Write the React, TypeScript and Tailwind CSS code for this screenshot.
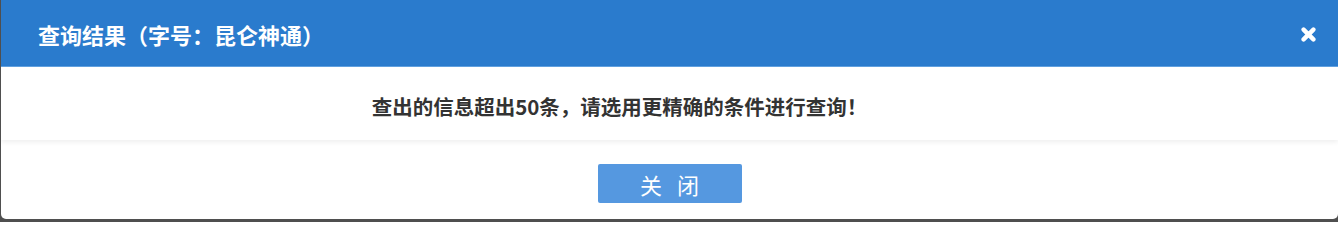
import React from "react";

export default function App() {
  const font = { fontFamily: '"Noto Sans CJK SC", "Noto Sans", sans-serif' };
  return (
    <div className="w-[1338px] h-[222px] bg-[#4f4f4f] pl-px pb-[3px]" style={font}>
      <div className="h-[219px] bg-white rounded-b-[5px] overflow-hidden flex flex-col">
        <div className="h-[67px] bg-[#2a7bcd] border-b border-[#62a2e2] flex items-center justify-between pl-[37px] pr-[22px] shrink-0">
          <span className="text-white font-bold text-[22px] leading-none mt-[2px]">查询结果（字号：昆仑神通）</span>
          <svg width="15" height="15" viewBox="0 0 15 15" className="mt-[2px]">
            <path d="M2.6 2.6 L12.4 12.4 M12.4 2.6 L2.6 12.4" stroke="white" strokeWidth="4.4" strokeLinecap="round" />
          </svg>
        </div>
        <div className="h-[73px] shrink-0 relative z-10 bg-white shadow-[0_2px_5px_rgba(0,0,0,0.07)] flex items-center justify-center pr-[100px]">
          <span className="text-[#333] font-bold text-[20.5px] leading-none mt-[6px]">查出的信息超出50条，请选用更精确的条件进行查询！</span>
        </div>
        <div className="flex-1 flex justify-center pt-[24px]">
          <button className="w-[144px] h-[39px] bg-[#5598e0] rounded-[2px] text-white text-[22px] leading-none tracking-[15px] pl-[15px]">
            关闭
          </button>
        </div>
      </div>
    </div>
  );
}
